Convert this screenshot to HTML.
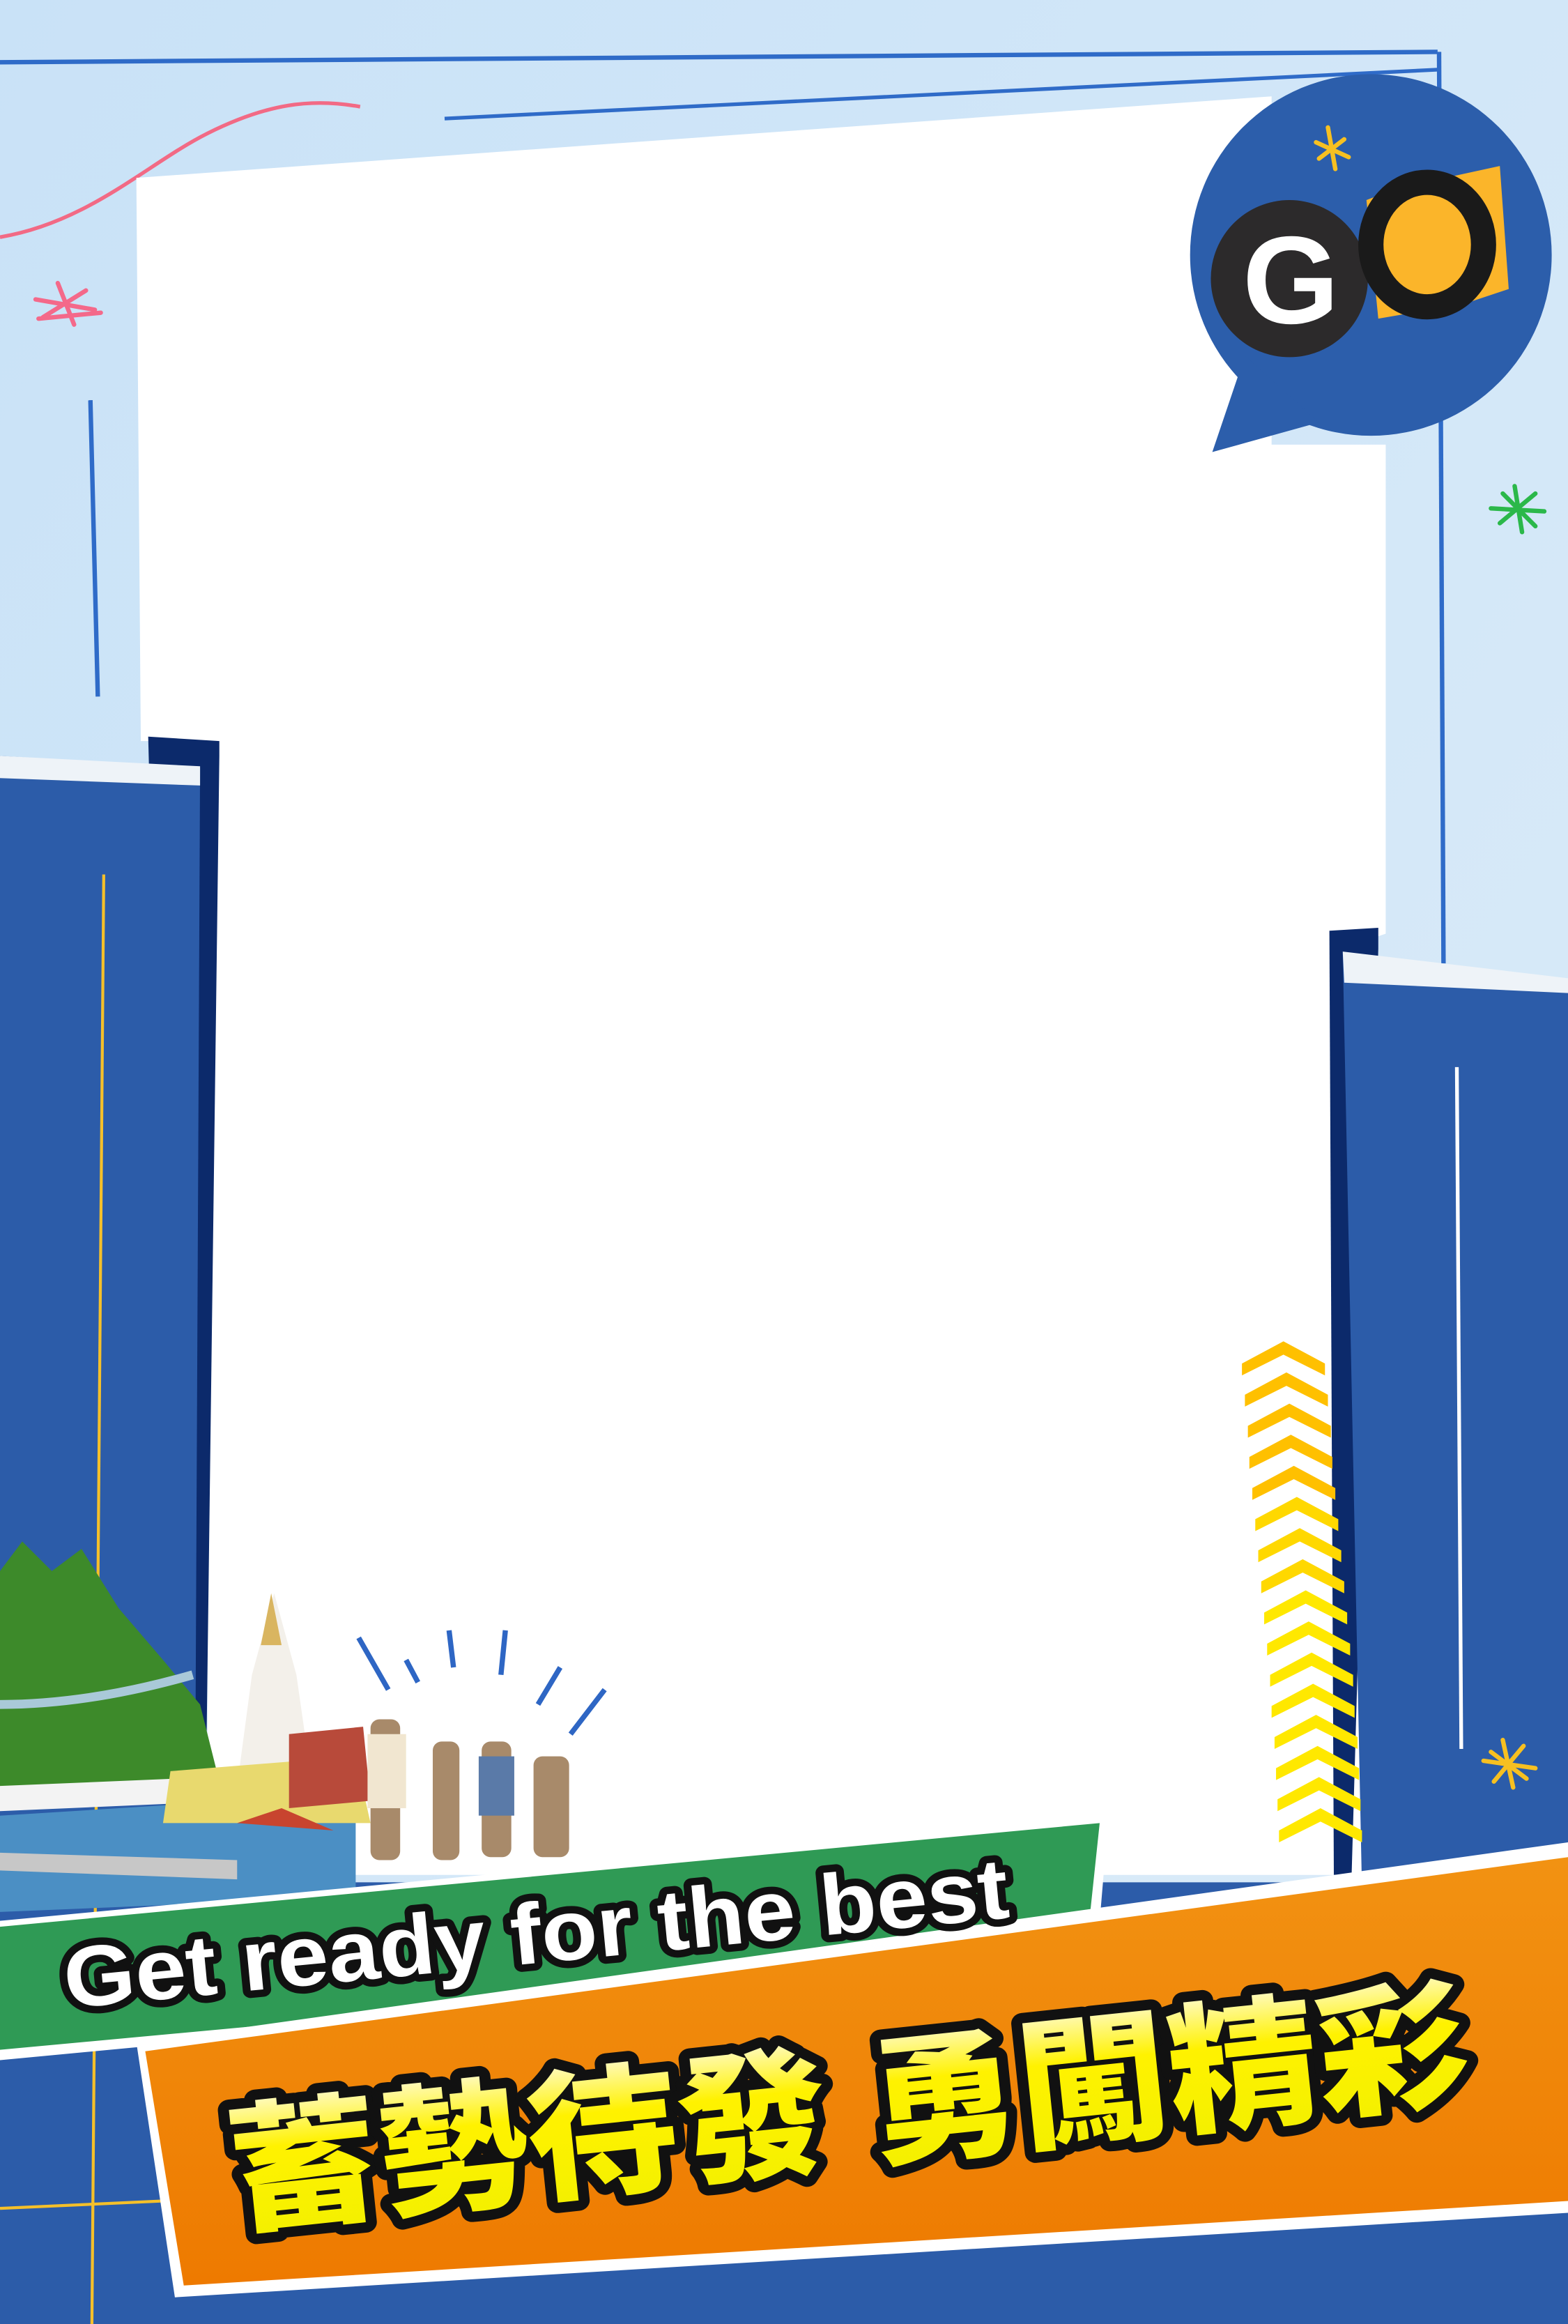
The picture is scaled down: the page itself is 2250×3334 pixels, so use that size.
<!DOCTYPE html>
<html><head><meta charset="utf-8"><style>
html,body{margin:0;padding:0;width:2250px;height:3334px;overflow:hidden;background:#d4e8f8}
svg{display:block}
</style></head><body>
<svg width="2250" height="3334" viewBox="0 0 1058 1568" preserveAspectRatio="none" xmlns="http://www.w3.org/2000/svg">
<defs>
<linearGradient id="bg" x1="0" y1="0" x2="1" y2="1"><stop offset="0" stop-color="#c9e2f7"/><stop offset="1" stop-color="#dcecf9"/></linearGradient>
<linearGradient id="yl" x1="0" y1="0" x2="0" y2="1"><stop offset="0" stop-color="#fffbd0"/><stop offset="0.35" stop-color="#fff200"/><stop offset="1" stop-color="#f2f000"/></linearGradient>
<linearGradient id="og" x1="0" y1="0" x2="0" y2="1"><stop offset="0" stop-color="#f29212"/><stop offset="1" stop-color="#ee7a00"/></linearGradient>
</defs>
<rect width="1058" height="1568" fill="url(#bg)"/>
<!-- blue lines -->
<path d="M0 42 L970 35" stroke="#2f6bc8" stroke-width="3" fill="none"/>
<path d="M300 80 L970 47" stroke="#2f6bc8" stroke-width="2.5" fill="none"/>
<path d="M971 35 L974 650" stroke="#2f6bc8" stroke-width="3" fill="none"/>
<path d="M61 270 L66 470" stroke="#2f6bc8" stroke-width="3" fill="none"/>
<path d="M0 160 C60 150 100 110 140 90 C180 70 210 66 243 72" stroke="#f26a85" stroke-width="2.5" fill="none"/>
<g stroke="#f4698a" stroke-width="3" stroke-linecap="round" transform="translate(44,205)">
<path d="M-20 -3 L20 4 M-15 9 L14 -9 M-5 -14 L6 14 M-18 10 L24 6"/></g>
<g stroke="#2bb84a" stroke-width="3" stroke-linecap="round" transform="translate(1024,343)">
<path d="M-18 0 L18 2 M-12 10 L12 -10 M-2 -15 L3 16 M-10 -10 L12 12"/></g>
<!-- white frame -->
<path d="M92 120 L858 65 L858 300 L935 300 L935 630 L905 640 L920 1265 L140 1265 L140 500 L95 500 Z" fill="#ffffff"/>
<!-- bottom blue -->
<rect x="0" y="1270" width="1058" height="298" fill="#2c5ca9"/>
<!-- left panel -->
<path d="M100 497 L148 500 L148 510 L138 1280 L120 1280 Z" fill="#0c2a6b"/>
<path d="M0 510 L135 518 L130 1568 L0 1568 Z" fill="#2c5ca9"/>
<path d="M0 510 L135 517 L135 530 L0 525 Z" fill="#eef3f8"/>
<path d="M70 590 L62 1570" stroke="#f5c02a" stroke-width="2"/>
<path d="M0 1490 L110 1485" stroke="#f5c02a" stroke-width="2"/>
<!-- right panel -->
<path d="M897 628 L930 626 L930 640 L912 1265 L900 1265 Z" fill="#0c2a6b"/>
<path d="M906 643 L1058 662 L1058 1568 L925 1568 Z" fill="#2c5ca9"/>
<path d="M906 642 L1058 660 L1058 670 L907 663 Z" fill="#eef3f8"/>
<path d="M983 720 L986 1180" stroke="#fff" stroke-width="2.5"/>
<g stroke="#f7c021" stroke-width="3" stroke-linecap="round" transform="translate(1018,1190)">
<path d="M-17 -2 L18 3 M-10 12 L10 -12 M-4 -16 L3 16 M-12 -8 L12 10"/></g>
<!-- chevrons -->
<g fill="#ffc000">
<path d="M838 920 L866 905 L894 920 L894 928 L866 914 L838 928 Z"/>
<path d="M840 941 L868 926 L896 941 L896 949 L868 935 L840 949 Z"/>
<path d="M842 962 L870 947 L898 962 L898 970 L870 956 L842 970 Z"/>
<path d="M843 983 L871 968 L899 983 L899 991 L871 977 L843 991 Z"/>
<path d="M845 1004 L873 989 L901 1004 L901 1012 L873 998 L845 1012 Z"/>
</g>
<g fill="#ffd800">
<path d="M847 1025 L875 1010 L903 1025 L903 1033 L875 1019 L847 1033 Z"/>
<path d="M849 1046 L877 1031 L905 1046 L905 1054 L877 1040 L849 1054 Z"/>
<path d="M851 1067 L879 1052 L907 1067 L907 1075 L879 1061 L851 1075 Z"/>
</g>
<g fill="#ffe800">
<path d="M853 1088 L881 1073 L909 1088 L909 1096 L881 1082 L853 1096 Z"/>
<path d="M855 1109 L883 1094 L911 1109 L911 1117 L883 1103 L855 1117 Z"/>
<path d="M857 1130 L885 1115 L913 1130 L913 1138 L885 1124 L857 1138 Z"/>
<path d="M858 1151 L886 1136 L914 1151 L914 1159 L886 1145 L858 1159 Z"/>
<path d="M860 1172 L888 1157 L916 1172 L916 1180 L888 1166 L860 1180 Z"/>
<path d="M861 1193 L889 1178 L917 1193 L917 1201 L889 1187 L861 1201 Z"/>
<path d="M862 1214 L890 1199 L918 1214 L918 1222 L890 1208 L862 1222 Z"/>
<path d="M863 1235 L891 1220 L919 1235 L919 1243 L891 1229 L863 1243 Z"/>
</g>
<!-- GO bubble -->
<circle cx="925" cy="172" r="122" fill="#2c5eab"/>
<path d="M818 305 L840 240 L890 285 Z" fill="#2c5eab"/>
<circle cx="870" cy="188" r="53" fill="#2c2a2b"/>
<text x="871" y="218" font-family="Liberation Sans,sans-serif" font-weight="bold" font-size="84" fill="#fff" text-anchor="middle">G</text>
<path d="M943 127 L1012 112 L1018 195 L988 205 L930 215 L922 135 Z" fill="#fbb52a"/>
<ellipse cx="963" cy="165" rx="38" ry="42" fill="none" stroke="#1a1a1a" stroke-width="17"/>
<g stroke="#f7c021" stroke-width="3" stroke-linecap="round" transform="translate(898,100)">
<path d="M-10 -4 L12 6 M-8 7 L9 -6 M-2 -14 L3 14"/></g>
<!-- collage -->
<path d="M0 1060 L15 1040 L35 1060 L55 1045 L80 1085 L110 1120 L135 1150 L150 1210 L0 1220 Z" fill="#3d8a2a"/>
<path d="M0 1150 Q60 1150 130 1130" stroke="#a9c9d8" stroke-width="6" fill="none"/>
<path d="M0 1225 L160 1215 L240 1225 L240 1280 L0 1290 Z" fill="#4b8fc4"/>
<path d="M0 1205 L120 1200 L160 1215 L0 1222 Z" fill="#f3f3f3"/>
<path d="M0 1250 L160 1255 L160 1268 L0 1262 Z" fill="#c7c7c7"/>
<path d="M185 1075 L200 1130 L210 1200 L160 1205 L170 1130 Z" fill="#f3f0ea"/>
<path d="M183 1075 L190 1110 L176 1110 Z" fill="#d9b560"/>
<path d="M115 1195 L240 1185 L250 1230 L110 1230 Z" fill="#e8d96e"/>
<path d="M195 1170 L245 1165 L250 1215 L195 1220 Z" fill="#b84a3a"/>
<path d="M160 1230 L190 1220 L225 1235 Z" fill="#c8442f"/>
<g fill="#a88a6a"><rect x="250" y="1160" width="20" height="95" rx="6"/><rect x="292" y="1175" width="18" height="80" rx="6"/><rect x="325" y="1175" width="20" height="78" rx="6"/><rect x="360" y="1185" width="24" height="68" rx="6"/></g>
<g fill="#f1e6d0"><rect x="248" y="1170" width="26" height="50"/></g>
<g fill="#5a7aa8"><rect x="323" y="1185" width="24" height="40"/></g>
<g stroke="#2e66c4" stroke-width="3.5">
<path d="M242 1105 L262 1140 M274 1120 L282 1135 M303 1100 L306 1125 M341 1100 L338 1130 M378 1125 L363 1150 M408 1140 L385 1170"/></g>
<!-- green banner -->
<path d="M0 1296 L748 1225 L740 1320 L0 1390 Z" fill="#fff"/>
<path d="M0 1300 L742 1230 L733 1315 L0 1383 Z" fill="#2f9a55"/>
<!-- orange banner -->
<path d="M92 1378 L1058 1243 L1058 1493 L118 1550 Z" fill="#fff"/>
<path d="M98 1384 L1058 1253 L1058 1485 L124 1542 Z" fill="url(#og)"/>
<!-- texts -->
<text transform="translate(45,1355) rotate(-5.5)" font-family="Liberation Sans,sans-serif" font-weight="bold" font-size="58" fill="#fff" stroke="#111" stroke-width="10" stroke-linejoin="round" paint-order="stroke" textLength="640" lengthAdjust="spacingAndGlyphs">Get ready for the best</text>
<text transform="translate(158,1500) rotate(-6)" font-family="Liberation Sans,'Noto Sans CJK TC',sans-serif" font-weight="900" font-size="95" fill="url(#yl)" stroke="#111" stroke-width="14" stroke-linejoin="round" paint-order="stroke" textLength="840" lengthAdjust="spacingAndGlyphs">蓄勢待發 勇闖精彩</text>
</svg>
</body></html>
